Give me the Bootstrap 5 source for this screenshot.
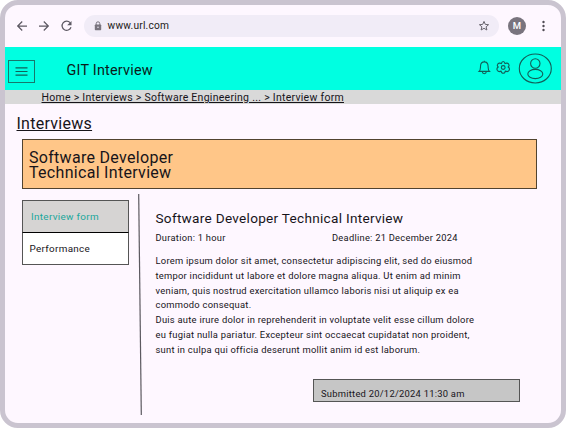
<!DOCTYPE html>
<html lang="en">
<head>
<meta charset="utf-8">
<meta name="viewport" content="width=device-width, initial-scale=1">
<title>GIT Interview</title>
<link href="https://cdn.jsdelivr.net/npm/bootstrap@5.3.0/dist/css/bootstrap.min.css" rel="stylesheet">
<style>
body{font-family:Roboto,sans-serif;color:#17141a;background:#fff;line-height:1.2}
.browser{width:566px;height:428px;border:5px solid #cac4d0;border-radius:18px;background:#fef7ff}
.toolbar{height:42px;padding:0 12px 0 11px}
.address{height:22px;width:415px;margin-left:10px;padding:0 9px 0 10px;border-radius:11px;background:#f1ecf7;font-size:10.2px;letter-spacing:.22px;color:#1d1b20}
.address span{margin-left:5.5px}
.profile{width:18px;height:18px;border-radius:50%;background:#79747e;color:#fff;font-size:9.5px;font-weight:500;margin-left:9px}
.topbar{height:43px;background:#00ffe1;padding:0 9px 0 3px}
.menu-btn{width:27px;height:23px;border:1px solid #17776c;border-radius:0;margin-top:5px}
.brand-name{font-size:14.4px;letter-spacing:.22px;color:#0b1c1a;margin:5px 0 0 31.5px}
.crumbs{height:14px;background:#d9d9d9;padding-left:36.5px;font-size:10.5px;line-height:15px;letter-spacing:.27px}
.crumbs a,.page-title{text-decoration:underline;text-decoration-thickness:1px;text-underline-offset:1px;color:#17141a}
.page-title{font-size:16px;letter-spacing:.27px;line-height:20px;margin:10px 0 0 11.5px}
.banner{width:515px;height:50px;margin:5px 0 0 17px;padding:11px 6px 0;border:1px solid #51432f;background:#ffc688;font-size:16px;line-height:14.7px;letter-spacing:.3px}
.side{width:107px;margin:11px 0 0 17px}
.side a{height:32px;border:1px solid #555;padding-left:6.5px;font-size:9.9px;letter-spacing:.32px;color:#17141a;text-decoration:none;background:#fff}
.side a.current{height:33px;background:#d6d4d3;color:#1ba79b;padding-left:8px;border-bottom-color:#000}
.side a+a{border-top:0}
.divider{margin:5px 0 0 9px}
.detail{width:366px;margin-left:13.5px;padding-top:20px}
.detail h2{font-size:13.6px;letter-spacing:.28px;line-height:18px}
.meta{font-size:9.3px;letter-spacing:.27px;line-height:12px;margin-top:5px}
.meta span:first-child{width:176.500px}
.copy{font-size:9.4px;letter-spacing:.25px;line-height:14.750px;margin-top:10px;white-space:nowrap}
.status{width:207px;height:23px;margin:22px 0 0 157.500px;padding:7px 0 0 7px;border:1px solid #555;background:#c6c6c6;font-size:9.4px;letter-spacing:.25px;line-height:14px}
</style>
<script src="https://cdn.jsdelivr.net/npm/bootstrap@5.3.0/dist/js/bootstrap.bundle.min.js"></script>
</head>
<body>
<div class="browser overflow-hidden">
  <div class="toolbar d-flex align-items-center">
    <svg width="58" height="14" viewBox="0 0 58 14" fill="none" stroke="#5d5963" stroke-width="1.25"><path d="M11 7H2M6.2 2.5 1.7 7l4.500 4.500M23 7h9M27.800 2.500 32.300 7l-4.500 4.500M54.100 3.600A4.600 4.600 0 1 0 55 8.300"/><path d="M55.500 1.900v4.300h-4.300z" fill="#5d5963" stroke="none"/></svg>
    <div class="address d-flex align-items-center">
      <svg width="8" height="10" viewBox="0 0 8 10" fill="none"><path d="M2.200 4V2.600a1.800 1.800 0 0 1 3.600 0V4" stroke="#79747e"/><rect x=".8" y="3.500" width="6.400" height="5.700" rx=".7" fill="#79747e"/><circle cx="4" cy="6.300" r=".8" fill="#e8e2ee"/></svg>
      <span>www.url.com</span>
      <svg class="ms-auto" width="12" height="12" viewBox="0 0 12 12" fill="none" stroke="#69656e"><path d="m6 1.400 1.300 3 3.300.3-2.500 2.100.8 3.200L6 8.300 3.100 10l.8-3.200-2.500-2.100 3.300-.3z"/></svg>
    </div>
    <div class="profile d-flex align-items-center justify-content-center">M</div>
    <svg class="ms-auto" width="12" height="12" viewBox="0 0 12 12" fill="#4f4b54"><circle cx="6.500" cy="2" r="1.200"/><circle cx="6.500" cy="6" r="1.200"/><circle cx="6.500" cy="10" r="1.200"/></svg>
  </div>
  <nav class="topbar d-flex align-items-center">
    <button class="menu-btn btn p-0 d-flex align-items-center justify-content-center" aria-label="Menu"><svg width="13" height="9" viewBox="0 0 13 9" stroke="#0f6259" stroke-width="1.100"><path d="M.5.900h12M.5 4.500h12M.5 8.100h12"/></svg></button>
    <span class="brand-name">GIT Interview</span>
    <svg class="ms-auto" width="76" height="32" viewBox="0 0 76 32" fill="none" stroke="#125f58" stroke-width="1.100">
      <path d="M3.100 18.400c1.500-1.400 1.300-2.800 1.400-5.200.1-2.600 1.400-4.300 3.800-4.300s3.700 1.700 3.800 4.300c.1 2.400-.1 3.800 1.400 5.200zM6.300 18.800c.2 2.500 3.800 2.500 4 0M8.300 8.900V7.800"/>
      <path d="M25.400 11.200c-1.300-.9-3.100-.6-3.700.7-.6 1.100-.2 2.200.6 2.700-1.300.8-1.600 2.200-1 3.300.8 1.300 2.400 1.500 3.800.7.100 1.500 1 2.300 2.100 2.300s2-.8 2.100-2.300c1.400.8 3 .6 3.800-.7.600-1.100.3-2.500-1-3.300.8-.5 1.200-1.600.6-2.700-.6-1.300-2.400-1.600-3.700-.7-.2-1.300-.9-2.100-1.800-2.100s-1.600.8-1.800 2.100z" stroke-linejoin="round" transform="translate(0 -.6)"/><circle cx="27.200" cy="14.500" r="1.900"/>
      <ellipse cx="59.300" cy="15.500" rx="16" ry="14.500"/><circle cx="59.300" cy="10.500" r="4.700"/><ellipse cx="59.300" cy="21" rx="7.500" ry="4.600"/>
    </svg>
  </nav>
  <div class="crumbs"><a href="#">Home &gt; Interviews &gt; Software Engineering ... &gt; Interview form</a></div>
  <h1 class="page-title mb-0 fw-normal">Interviews</h1>
  <div class="banner">Software Developer<br>Technical Interview</div>
  <div class="d-flex align-items-start">
    <div class="side d-flex flex-column">
      <a href="#" class="current d-flex align-items-center">Interview form</a>
      <a href="#" class="d-flex align-items-center">Performance</a>
    </div>
    <svg class="divider flex-shrink-0" width="4" height="221" viewBox="0 0 4 221"><path d="M.7 0 3.300 221" stroke="#5c5960" stroke-width="1.200"/></svg>
    <main class="detail">
      <h2 class="mb-0 fw-normal">Software Developer Technical Interview</h2>
      <div class="meta d-flex"><span>Duration: 1 hour</span><span>Deadline: 21 December 2024</span></div>
      <p class="copy mb-0">Lorem ipsum dolor sit amet, consectetur adipiscing elit, sed do eiusmod<br>tempor incididunt ut labore et dolore magna aliqua. Ut enim ad minim<br>veniam, quis nostrud exercitation ullamco laboris nisi ut aliquip ex ea<br>commodo consequat.<br>Duis aute irure dolor in reprehenderit in voluptate velit esse cillum dolore<br>eu fugiat nulla pariatur. Excepteur sint occaecat cupidatat non proident,<br>sunt in culpa qui officia deserunt mollit anim id est laborum.</p>
      <div class="status">Submitted 20/12/2024 11:30 am</div>
    </main>
  </div>
</div>
</body>
</html>
